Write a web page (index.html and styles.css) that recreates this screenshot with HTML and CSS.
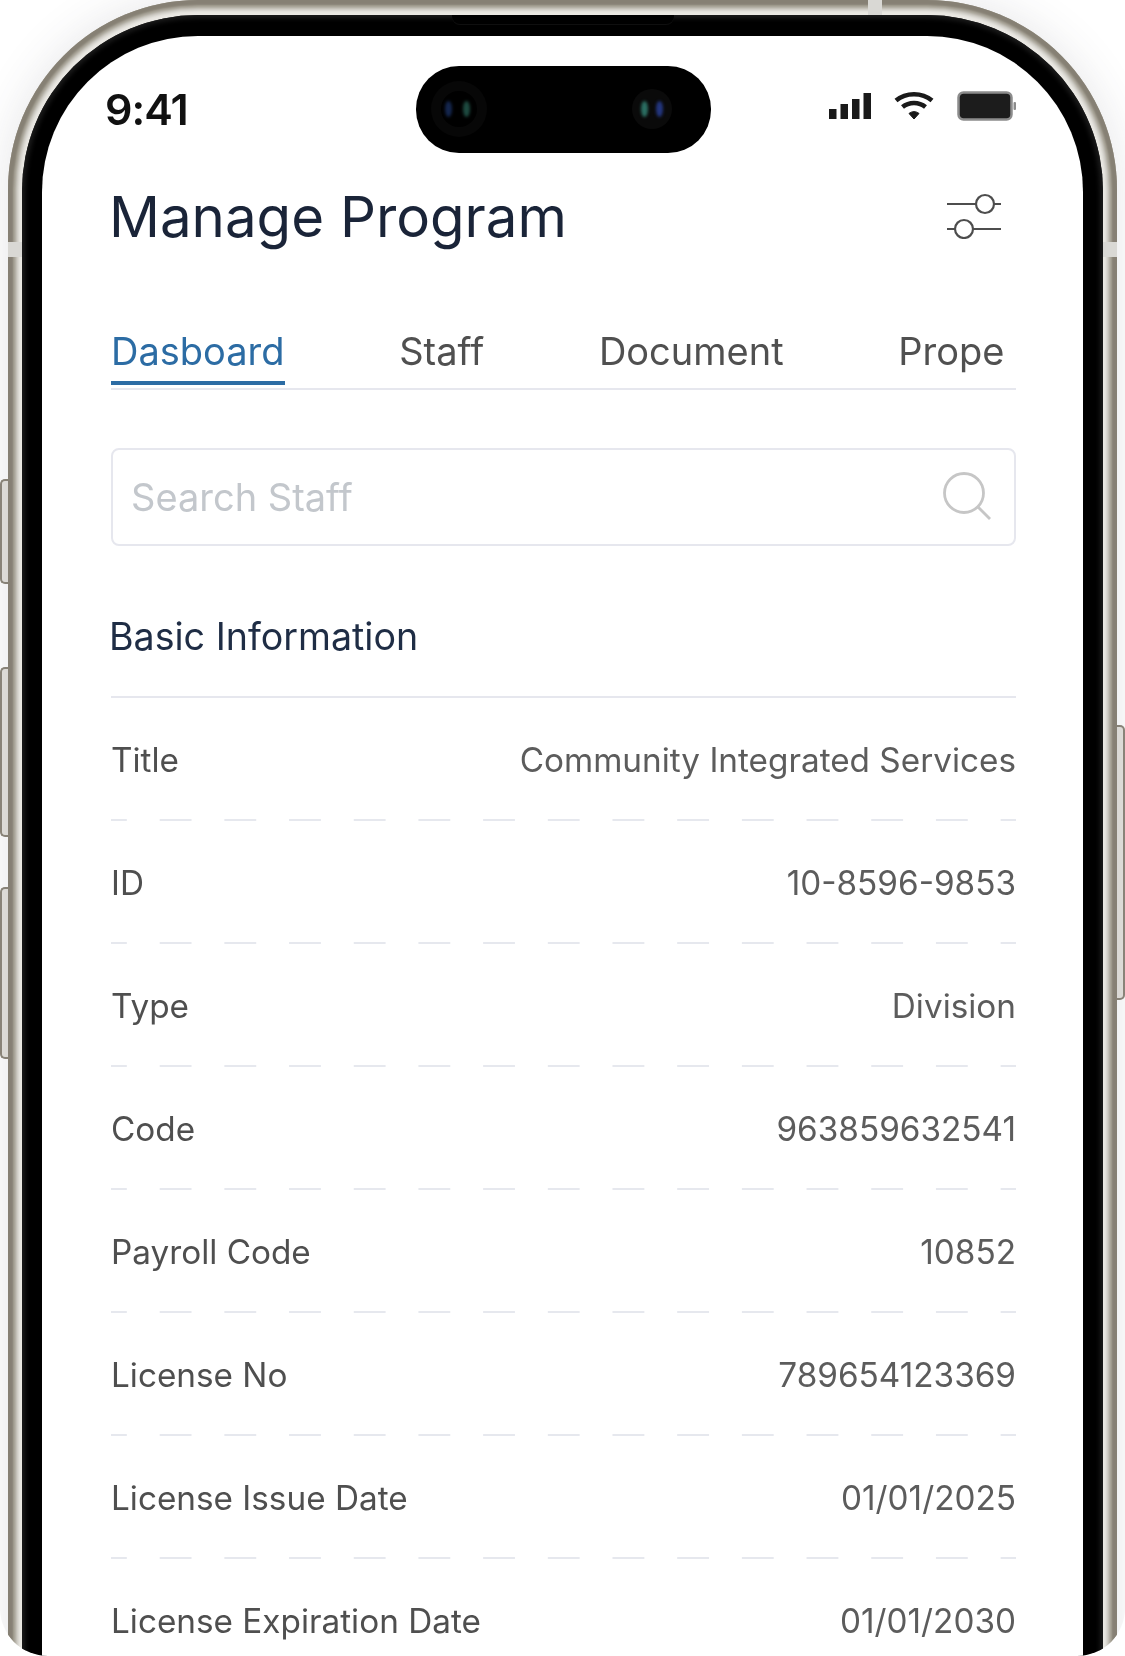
FILE: index.html
```html
<!DOCTYPE html>
<html lang="en">
<head>
    <meta charset="UTF-8">
    <meta name="viewport" content="width=device-width, initial-scale=1.0">
    <title>Manage Program</title>
    <link rel="stylesheet" href="styles.css">
</head>
<body>
    <div class="page">
        <span class="side-btn side-left btn-a"></span>
        <span class="side-btn side-left btn-b"></span>
        <span class="side-btn side-left btn-c"></span>
        <span class="side-btn side-right btn-d"></span>

        <div class="frame">
            <span class="band-mark mark-top"></span>
            <span class="band-mark mark-left"></span>
            <span class="band-mark mark-right"></span>
            <div class="bezel">
                <span class="speaker"></span>
                <div class="screen">
                    <div class="island">
                        <span class="lens lens-big"></span>
                        <span class="lens lens-small"></span>
                    </div>

                    <div class="status-bar">
                        <span class="time">9:41</span>
                        <div class="status-icons">
                            <svg class="icon-signal" width="42" height="26" viewBox="0 0 42 26" fill="#1a1a1a">
                                <rect x="0" y="16" width="7.5" height="10"/>
                                <rect x="11.5" y="11" width="7.5" height="15"/>
                                <rect x="23" y="6" width="7.5" height="20"/>
                                <rect x="34.5" y="0" width="7.5" height="26"/>
                            </svg>
                            <svg class="icon-wifi" width="40" height="30" viewBox="0 0 40 30" fill="none" stroke="#1a1a1a">
                                <path d="M2 9.5C12 1 28 1 38 9.5" stroke-width="4.5"/>
                                <path d="M8.5 16C15 10.5 25 10.5 31.5 16" stroke-width="4.5"/>
                                <path d="M15 22.5C18 20 22 20 25 22.5L20 28Z" fill="#1a1a1a" stroke-width="1"/>
                            </svg>
                            <svg class="icon-battery" width="60" height="30" viewBox="0 0 60 30">
                                <rect x="1.5" y="1.5" width="53" height="27" rx="5" fill="#1c1c1c" stroke="#8c8c8c" stroke-width="2.5"/>
                                <rect x="56.5" y="11" width="2.5" height="8" rx="1" fill="#8c8c8c"/>
                            </svg>
                        </div>
                    </div>

                    <div class="content">
                        <header class="top-row">
                            <h1>Manage Program</h1>
                            <svg class="icon-filter" width="56" height="46" viewBox="0 0 56 46" fill="none" stroke="#4d4d4d" stroke-width="2.2">
                                <path d="M1 11H30M48 11H55"/>
                                <circle cx="39" cy="11" r="9"/>
                                <path d="M1 36H9M27 36H55"/>
                                <circle cx="18" cy="36" r="9"/>
                            </svg>
                        </header>

                        <nav class="tabs">
                            <a class="tab active">Dasboard</a>
                            <a class="tab">Staff</a>
                            <a class="tab">Document</a>
                            <a class="tab">Prope</a>
                        </nav>

                        <div class="search">
                            <span class="placeholder">Search Staff</span>
                            <svg class="icon-search" width="50" height="50" viewBox="0 0 50 50" fill="none" stroke="#c6c6c6" stroke-width="2.8">
                                <circle cx="21" cy="21" r="19.5"/>
                                <path d="M35 35L47 47"/>
                            </svg>
                        </div>

                        <h2>Basic Information</h2>

                        <div class="info-list">
                            <div class="row"><span>Title</span><span class="val">Community Integrated Services</span></div>
                            <div class="row"><span>ID</span><span class="val">10-8596-9853</span></div>
                            <div class="row"><span>Type</span><span class="val">Division</span></div>
                            <div class="row"><span>Code</span><span class="val">963859632541</span></div>
                            <div class="row"><span>Payroll Code</span><span class="val">10852</span></div>
                            <div class="row"><span>License No</span><span class="val">789654123369</span></div>
                            <div class="row"><span>License Issue Date</span><span class="val">01/01/2025</span></div>
                            <div class="row"><span>License Expiration Date</span><span class="val">01/01/2030</span></div>
                        </div>
                    </div>
                </div>
            </div>
        </div>
    </div>
</body>
</html>
```

FILE: styles.css
```css
html, body {
    margin: 0;
    padding: 0;
    background: #fff;
}
body {
    font-family: Inter, "Liberation Sans", sans-serif;
}
.page {
    position: relative;
    width: 1125px;
    height: 1656px;
    padding: 0 8px;
    box-sizing: border-box;
    overflow: hidden;
    background: #fff;
    border-radius: 0 0 48px 48px;
}

/* phone shell */
.frame {
    position: relative;
    height: 1900px;
    padding: 15px 14px 0;
    box-sizing: border-box;
    border-radius: 190px;
    background: #ebe9e4;
    box-shadow:
        0 0 46px rgba(60, 60, 80, 0.13),
        inset 0 0 2px 5px #868074,
        inset 0 0 3px 8px #a5a094,
        inset 0 0 3px 11px #d3d1cb;
}
.band-mark {
    position: absolute;
    background: #d9d8d4;
}
.mark-top {
    left: 860px;
    top: 0;
    width: 14px;
    height: 15px;
}
.mark-left {
    left: 0;
    top: 242px;
    width: 14px;
    height: 15px;
}
.mark-right {
    right: 0;
    top: 242px;
    width: 14px;
    height: 15px;
}
.bezel {
    position: relative;
    height: 100%;
    padding: 21px 20px 0;
    box-sizing: border-box;
    border-radius: 176px;
    background: #000;
    box-shadow: inset 0 0 5px 3px #1c1c1c;
}
.speaker {
    position: absolute;
    left: 430px;
    top: 0;
    width: 222px;
    height: 9px;
    background: #000;
    border-radius: 0 0 8px 8px;
    box-shadow: 0 1px 0 #0f0f0f;
}
.side-btn {
    position: absolute;
    box-sizing: border-box;
    background: #e6e4df;
    border: 2px solid #8d877b;
}
.side-left {
    left: 0;
    width: 9px;
    border-right: none;
    border-radius: 5px 0 0 5px;
}
.side-right {
    left: 1116px;
    width: 9px;
    border-left: none;
    border-radius: 0 5px 5px 0;
}
.btn-a { top: 479px; height: 105px; }
.btn-b { top: 667px; height: 170px; }
.btn-c { top: 887px; height: 172px; }
.btn-d { top: 725px; height: 275px; }

/* screen */
.screen {
    position: relative;
    height: 100%;
    overflow: hidden;
    background: #fff;
    border-radius: 156px;
}
.island {
    position: absolute;
    left: 374px;
    top: 30px;
    width: 295px;
    height: 87px;
    background: #000;
    border-radius: 43px;
}
.lens {
    position: absolute;
    border-radius: 50%;
    background: #070707;
}
.lens::before,
.lens::after {
    content: "";
    position: absolute;
    top: 50%;
    width: 7px;
    height: 16px;
    margin-top: -8px;
    border-radius: 50%;
    filter: blur(1.5px);
}
.lens-big {
    left: 15px;
    top: 15px;
    width: 56px;
    height: 56px;
    box-shadow: inset 0 0 0 10px #070707;
    background: #000;
}
.lens-big::before { left: 14px; background: #14264e; }
.lens-big::after { left: 32px; background: #1d4a40; }
.lens-small {
    left: 216px;
    top: 23px;
    width: 40px;
    height: 40px;
    background: #0a0a0a;
}
.lens-small::before { left: 9px; background: #2b6e62; }
.lens-small::after { left: 24px; background: #23367f; }

.status-bar {
    display: flex;
    justify-content: space-between;
    align-items: center;
    height: 58px;
    padding: 44px 66px 0 63px;
    filter: blur(0.5px);
}
.time {
    font-size: 43px;
    font-weight: 600;
    letter-spacing: -1px;
    line-height: 58px;
    color: #111;
}
.status-icons {
    display: flex;
    align-items: center;
    gap: 23px;
    padding-bottom: 6px;
}
.content {
    padding: 0 67px 0 69px;
    filter: blur(0.5px);
}
.top-row {
    display: flex;
    justify-content: space-between;
    align-items: center;
    height: 100px;
    margin-top: 28px;
    margin-left: -2px;
    padding-right: 14px;
}
h1 {
    margin: 0;
    font-size: 56.4px;
    font-weight: 400;
    color: #1a2438;
}

/* tabs */
.tabs {
    display: flex;
    gap: 114.7px;
    height: 100px;
    margin-top: 22px;
    align-items: flex-end;
    border-bottom: 2px solid #e6e7ee;
}
.tab {
    padding-bottom: 15px;
    font-size: 38px;
    line-height: 44px;
    color: #505050;
}
.tab.active {
    color: #2c6ca4;
    padding-bottom: 8px;
    border-bottom: 4px solid #2c6ca4;
    margin-bottom: 3px;
}

.search {
    display: flex;
    justify-content: space-between;
    align-items: center;
    height: 98px;
    margin-top: 58px;
    padding: 0 21px 0 18px;
    box-sizing: border-box;
    border: 2px solid #e6e7ee;
    border-radius: 8px;
}
.placeholder {
    font-size: 38px;
    color: #c3c7cc;
}
h2 {
    margin: 0;
    height: 152px;
    line-height: 182px;
    box-sizing: border-box;
    font-size: 37.6px;
    font-weight: 400;
    color: #1f2d45;
    border-bottom: 2px solid #e6e7ee;
    text-indent: -2px;
}
.row {
    display: flex;
    justify-content: space-between;
    align-items: center;
    height: 123px;
    box-sizing: border-box;
    font-size: 33.3px;
    color: #4f4f4f;
    background-image: linear-gradient(90deg, #e6e8ee 32px, transparent 32px);
    background-size: 64.7px 2px;
    background-position: -16px bottom;
    background-repeat: repeat-x;
}
.val {
    color: #5c5c5c;
}
```
